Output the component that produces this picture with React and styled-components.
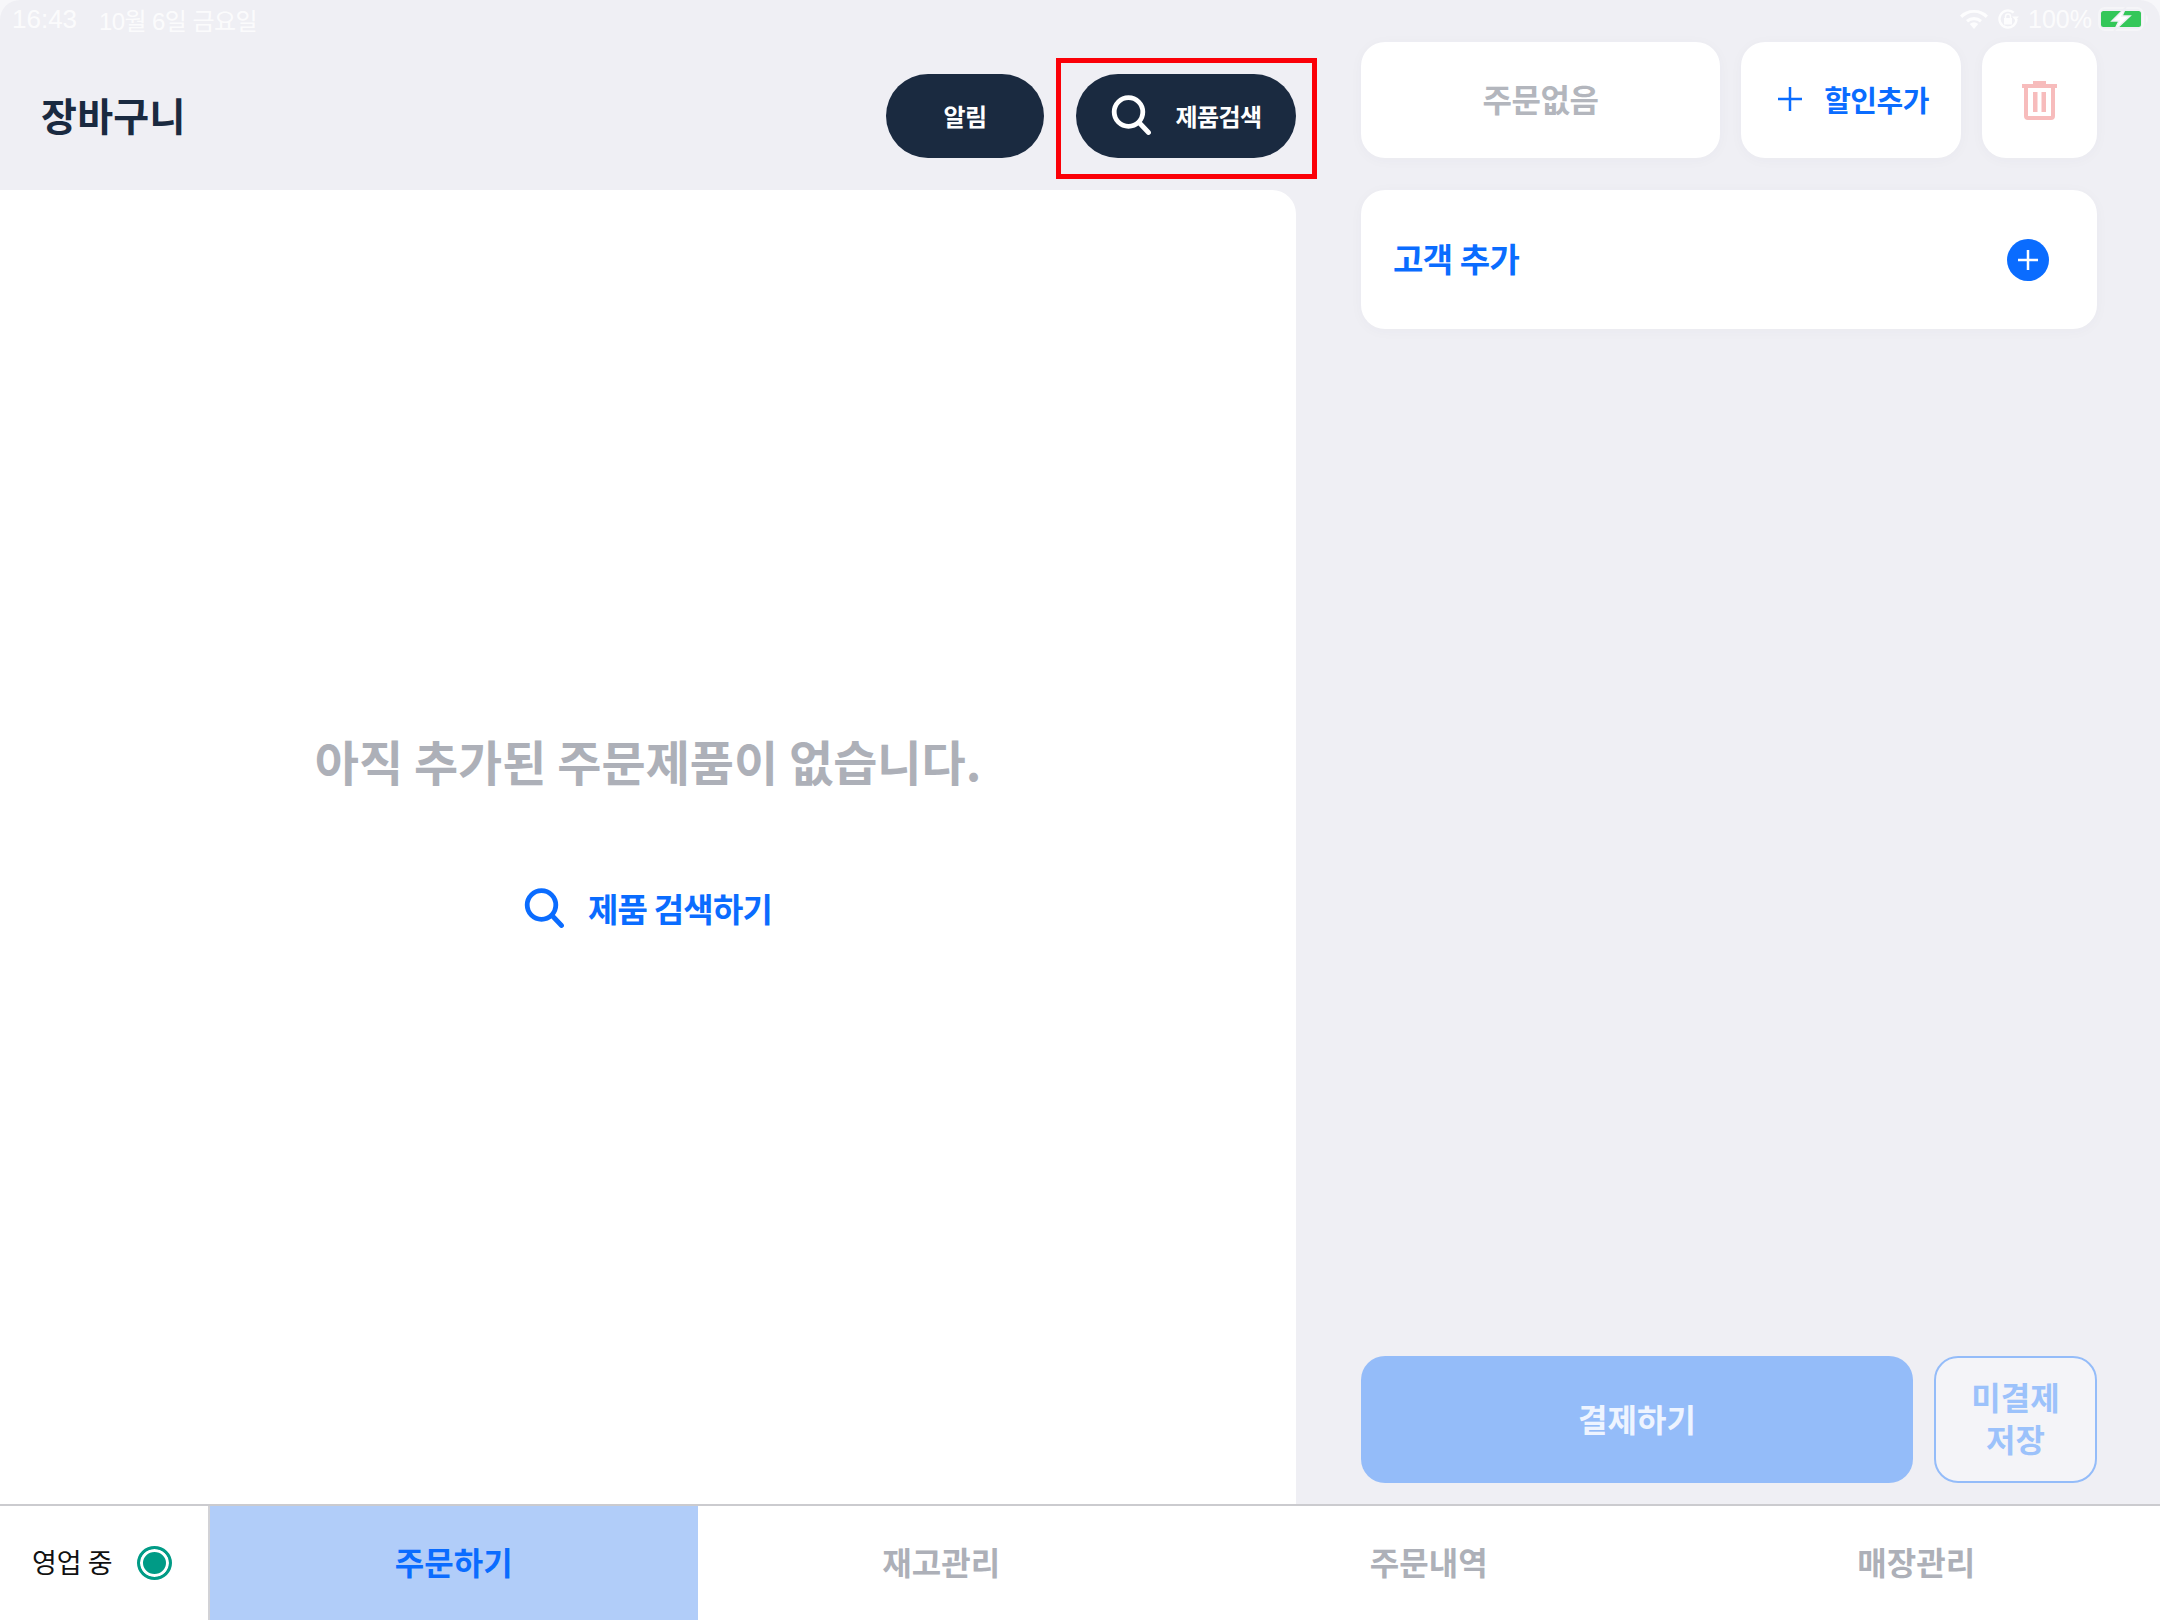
import React from 'react';
import styled, { createGlobalStyle } from 'styled-components';

const GlobalStyle = createGlobalStyle`
  html, body {
    margin: 0;
    padding: 0;
    background: #f7f7fa;
  }
  * {
    box-sizing: border-box;
  }
  body {
    font-family: "Noto Sans CJK KR", "Noto Sans", sans-serif;
  }
`;

const blue = '#0a6cff';
const navy = '#1a2a40';
const grey = '#adb0b8';

const Screen = styled.div`
  width: 2160px;
  height: 1620px;
  display: flex;
  flex-direction: column;
  overflow: hidden;
  background: #f7f7fa;
`;

const StatusBar = styled.div`
  height: 40px;
  flex: none;
  padding: 0 11px 2px 12px;
  display: flex;
  align-items: center;
  justify-content: space-between;
  background: #efeff4;
  border-radius: 20px 20px 0 0;
  color: rgba(255, 255, 255, 0.8);
  font-family: "Liberation Sans", "Noto Sans CJK KR", sans-serif;
  font-size: 26px;
`;

const StatusGroup = styled.div`
  display: flex;
  align-items: center;
  gap: ${(p) => p.$gap}px;
`;

const StatusDate = styled.span`
  font-size: 24px;
  letter-spacing: -0.6px;
`;

const BatteryText = styled.span`
  margin-right: -3px;
  font-size: 25px;
`;

const Main = styled.div`
  flex: 1;
  min-height: 0;
  display: flex;
  background: #efeff4;
`;

const CartColumn = styled.section`
  width: 1296px;
  flex: none;
  display: flex;
  flex-direction: column;
`;

const CartHeader = styled.header`
  height: 150px;
  flex: none;
  padding: 2px 0 0 41px;
  display: flex;
  align-items: center;
  justify-content: space-between;
`;

const CartTitle = styled.h1`
  margin: 0 0 5px;
  color: ${navy};
  font-size: 39px;
  font-weight: 700;
  letter-spacing: 0.3px;
`;

const HeaderActions = styled.div`
  display: flex;
  align-items: center;
  gap: 32px;
`;

const PillButton = styled.button`
  position: relative;
  height: 84px;
  padding: 0 0 2px;
  border: 0;
  border-radius: 42px;
  background: ${navy};
  color: #fff;
  font-family: inherit;
  font-size: 24px;
  font-weight: 700;
  letter-spacing: -0.6px;
  display: flex;
  align-items: center;
  justify-content: center;
  gap: 25px;
  width: ${(p) => p.$width}px;
`;

const HighlightFrame = styled.span`
  position: absolute;
  top: -16px;
  bottom: -21px;
  left: -20px;
  right: -21px;
  border: 5px solid #fb0007;
  pointer-events: none;
`;

const CartBody = styled.div`
  flex: 1;
  background: #fff;
  border-top-right-radius: 24px;
  padding-bottom: 37px;
  display: flex;
  flex-direction: column;
  align-items: center;
  justify-content: center;
  gap: 89px;
`;

const EmptyMessage = styled.p`
  margin: 0;
  color: ${grey};
  font-size: 48px;
  font-weight: 700;
  line-height: 70px;
`;

const SearchLink = styled.a`
  display: flex;
  align-items: center;
  gap: 24px;
  color: ${blue};
  font-size: 33px;
  font-weight: 700;
  letter-spacing: -0.8px;
  line-height: 48px;
`;

const SidePanel = styled.aside`
  flex: 1;
  padding: 2px 63px 21px 65px;
  display: flex;
  flex-direction: column;
`;

const TopRow = styled.div`
  display: flex;
  gap: 21px;
`;

const Card = styled.div`
  height: 116px;
  padding: 0 0 ${(p) => p.$lift ?? 3}px ${(p) => p.$indent || 0}px;
  border-radius: 24px;
  background: #fff;
  box-shadow: 0 2px 14px rgba(60, 60, 90, 0.03);
  display: flex;
  align-items: center;
  justify-content: center;
  gap: 22px;
  width: ${(p) => p.$width}px;
  color: ${(p) => p.$color || blue};
  font-size: ${(p) => p.$size || 29}px;
  font-weight: 700;
  letter-spacing: -0.5px;
`;

const CustomerCard = styled.div`
  margin-top: 32px;
  height: 139px;
  padding: 0 48px 0 32px;
  border-radius: 24px;
  background: #fff;
  box-shadow: 0 2px 14px rgba(60, 60, 90, 0.03);
  display: flex;
  align-items: center;
  justify-content: space-between;
  color: ${blue};
  font-size: 33px;
  font-weight: 700;
  letter-spacing: -0.5px;
`;

const CustomerLabel = styled.span`
  margin-bottom: 3px;
`;

const AddCircle = styled.span`
  width: 42px;
  height: 42px;
  border-radius: 50%;
  background: ${blue};
  display: flex;
  align-items: center;
  justify-content: center;
`;

const PayRow = styled.div`
  margin-top: auto;
  height: 127px;
  display: flex;
  gap: 21px;
`;

const PayButton = styled.button`
  flex: 1;
  padding: 0 0 4px;
  border: 0;
  border-radius: 24px;
  background: #94bcf9;
  color: #eef4ff;
  font-family: inherit;
  font-size: 32px;
  font-weight: 700;
`;

const SaveButton = styled.button`
  width: 163px;
  flex: none;
  padding: 0 0 5px;
  border: 2px solid #94bcf9;
  border-radius: 24px;
  background: #f4f4f8;
  color: #9cc2fb;
  font-family: inherit;
  font-size: 32px;
  font-weight: 700;
  line-height: 42px;
`;

const BottomNav = styled.nav`
  height: 116px;
  flex: none;
  display: flex;
  background: #fff;
  border-top: 2px solid #cbcbcf;
`;

const ShopStatus = styled.div`
  width: 210px;
  flex: none;
  padding: 0 0 3px 32px;
  display: flex;
  align-items: center;
  gap: 24px;
  color: #111;
  font-size: 27px;
  border-right: 2px solid #d2d2d6;
`;

const StatusDot = styled.span`
  width: 35px;
  height: 34px;
  margin-top: 3px;
  border-radius: 50%;
  background: #009b86;
  border: 3px solid #009b86;
  box-shadow: inset 0 0 0 3px #fff;
`;

const Tab = styled.div`
  flex: 1;
  padding-bottom: 4px;
  display: flex;
  align-items: center;
  justify-content: center;
  background: ${(p) => (p.$active ? '#b1cdf9' : '#fff')};
  color: ${(p) => (p.$active ? blue : grey)};
  font-size: 32px;
  font-weight: 700;
`;

const SearchIcon = ({ color }) => (
  <svg width="40" height="40" viewBox="0 0 40 40" fill="none">
    <circle cx="17.500" cy="17" r="14.300" stroke={color} strokeWidth="4.800" />
    <path d="M28.500 28 L37.500 37.500" stroke={color} strokeWidth="4.800" strokeLinecap="round" />
  </svg>
);

const PlusIcon = ({ size, color, width }) => (
  <svg width={size} height={size} viewBox="0 0 24 24" fill="none">
    <path d="M12 0v24M0 12h24" stroke={color} strokeWidth={width} />
  </svg>
);

const TrashIcon = () => (
  <svg width="35" height="39" viewBox="0 0 35 39" fill="#f7bcbc">
    <path d="M11 0h13v3h11v4H0V3h11z" />
    <path fillRule="evenodd" d="M2 6h31v29a4 4 0 0 1-4 4H6a4 4 0 0 1-4-4zM6 7v28h23V7z" />
    <path d="M11 11h4.500v20H11zM19.500 11H24v20h-4.500z" />
  </svg>
);

const WifiIcon = () => (
  <svg width="28" height="20" viewBox="0 0 28 20" fill="#fff" fillOpacity="0.85">
    <path d="M14 20l-4.300-5a6.500 6.500 0 0 1 8.600 0z" />
    <path d="M14 8a12 12 0 0 1 8 3l-2 2.500a9 9 0 0 0-12 0L6 11a12 12 0 0 1 8-3z" />
    <path d="M14 1a19 19 0 0 1 14 5.500l-2.200 2.500a16 16 0 0 0-23.600 0L0 6.500A19 19 0 0 1 14 1z" />
  </svg>
);

const RotationLockIcon = () => (
  <svg width="22" height="22" viewBox="0 0 22 22" fill="none">
    <path d="M19.500 11a8.500 8.500 0 1 1-2.800-6.300" stroke="#fff" strokeOpacity="0.85" strokeWidth="2.400" />
    <path d="M15 8.500h7l-3.500 4z" fill="#fff" fillOpacity="0.85" />
    <path d="M7 10h8v6.500H7z" fill="#fff" fillOpacity="0.85" />
    <path d="M8.500 10V8.500a2.500 2.500 0 0 1 5 0V10" stroke="#fff" strokeOpacity="0.85" strokeWidth="1.500" />
  </svg>
);

const BatteryIcon = () => (
  <svg width="51" height="24" viewBox="0 0 51 24" fill="none">
    <rect x="1" y="1" width="44" height="22" rx="6" stroke="#fff" strokeOpacity="0.4" strokeWidth="2" />
    <rect x="3" y="4" width="40" height="16" rx="2.500" fill="#34c759" />
    <path d="M48 8c2.500.8 2.500 7.200 0 8z" fill="#fff" fillOpacity="0.4" />
    <path d="M28 0L14 14h7l-5 10 16-15h-8z" fill="#fff" stroke="#efeff4" strokeWidth="1.500" />
  </svg>
);

const tabs = ['주문하기', '재고관리', '주문내역', '매장관리'];

const App = () => (
  <Screen>
    <GlobalStyle />
    <StatusBar>
      <StatusGroup $gap={22}>
        <span>16:43</span>
        <StatusDate>10월 6일 금요일</StatusDate>
      </StatusGroup>
      <StatusGroup $gap={9}>
        <WifiIcon />
        <RotationLockIcon />
        <BatteryText>100%</BatteryText>
        <BatteryIcon />
      </StatusGroup>
    </StatusBar>
    <Main>
      <CartColumn>
        <CartHeader>
          <CartTitle>장바구니</CartTitle>
          <HeaderActions>
            <PillButton $width={158}>알림</PillButton>
            <PillButton $width={220}>
              <SearchIcon color="#fff" />
              제품검색
              <HighlightFrame />
            </PillButton>
          </HeaderActions>
        </CartHeader>
        <CartBody>
          <EmptyMessage>아직 추가된 주문제품이 없습니다.</EmptyMessage>
          <SearchLink>
            <SearchIcon color={blue} />
            제품 검색하기
          </SearchLink>
        </CartBody>
      </CartColumn>
      <SidePanel>
        <TopRow>
          <Card $width={359} $color="#b3b6bd" $size={32} $lift={4}>주문없음</Card>
          <Card $width={220} $indent={5}>
            <PlusIcon size={24} color={blue} width={2.5} />
            할인추가
          </Card>
          <Card $width={115} $lift={0}><TrashIcon /></Card>
        </TopRow>
        <CustomerCard>
          <CustomerLabel>고객 추가</CustomerLabel>
          <AddCircle><PlusIcon size={20} color="#fff" width={3} /></AddCircle>
        </CustomerCard>
        <PayRow>
          <PayButton>결제하기</PayButton>
          <SaveButton>미결제<br />저장</SaveButton>
        </PayRow>
      </SidePanel>
    </Main>
    <BottomNav>
      <ShopStatus>
        영업 중
        <StatusDot />
      </ShopStatus>
      {tabs.map((tab, i) => (
        <Tab key={tab} $active={i === 0}>{tab}</Tab>
      ))}
    </BottomNav>
  </Screen>
);

export default App;
